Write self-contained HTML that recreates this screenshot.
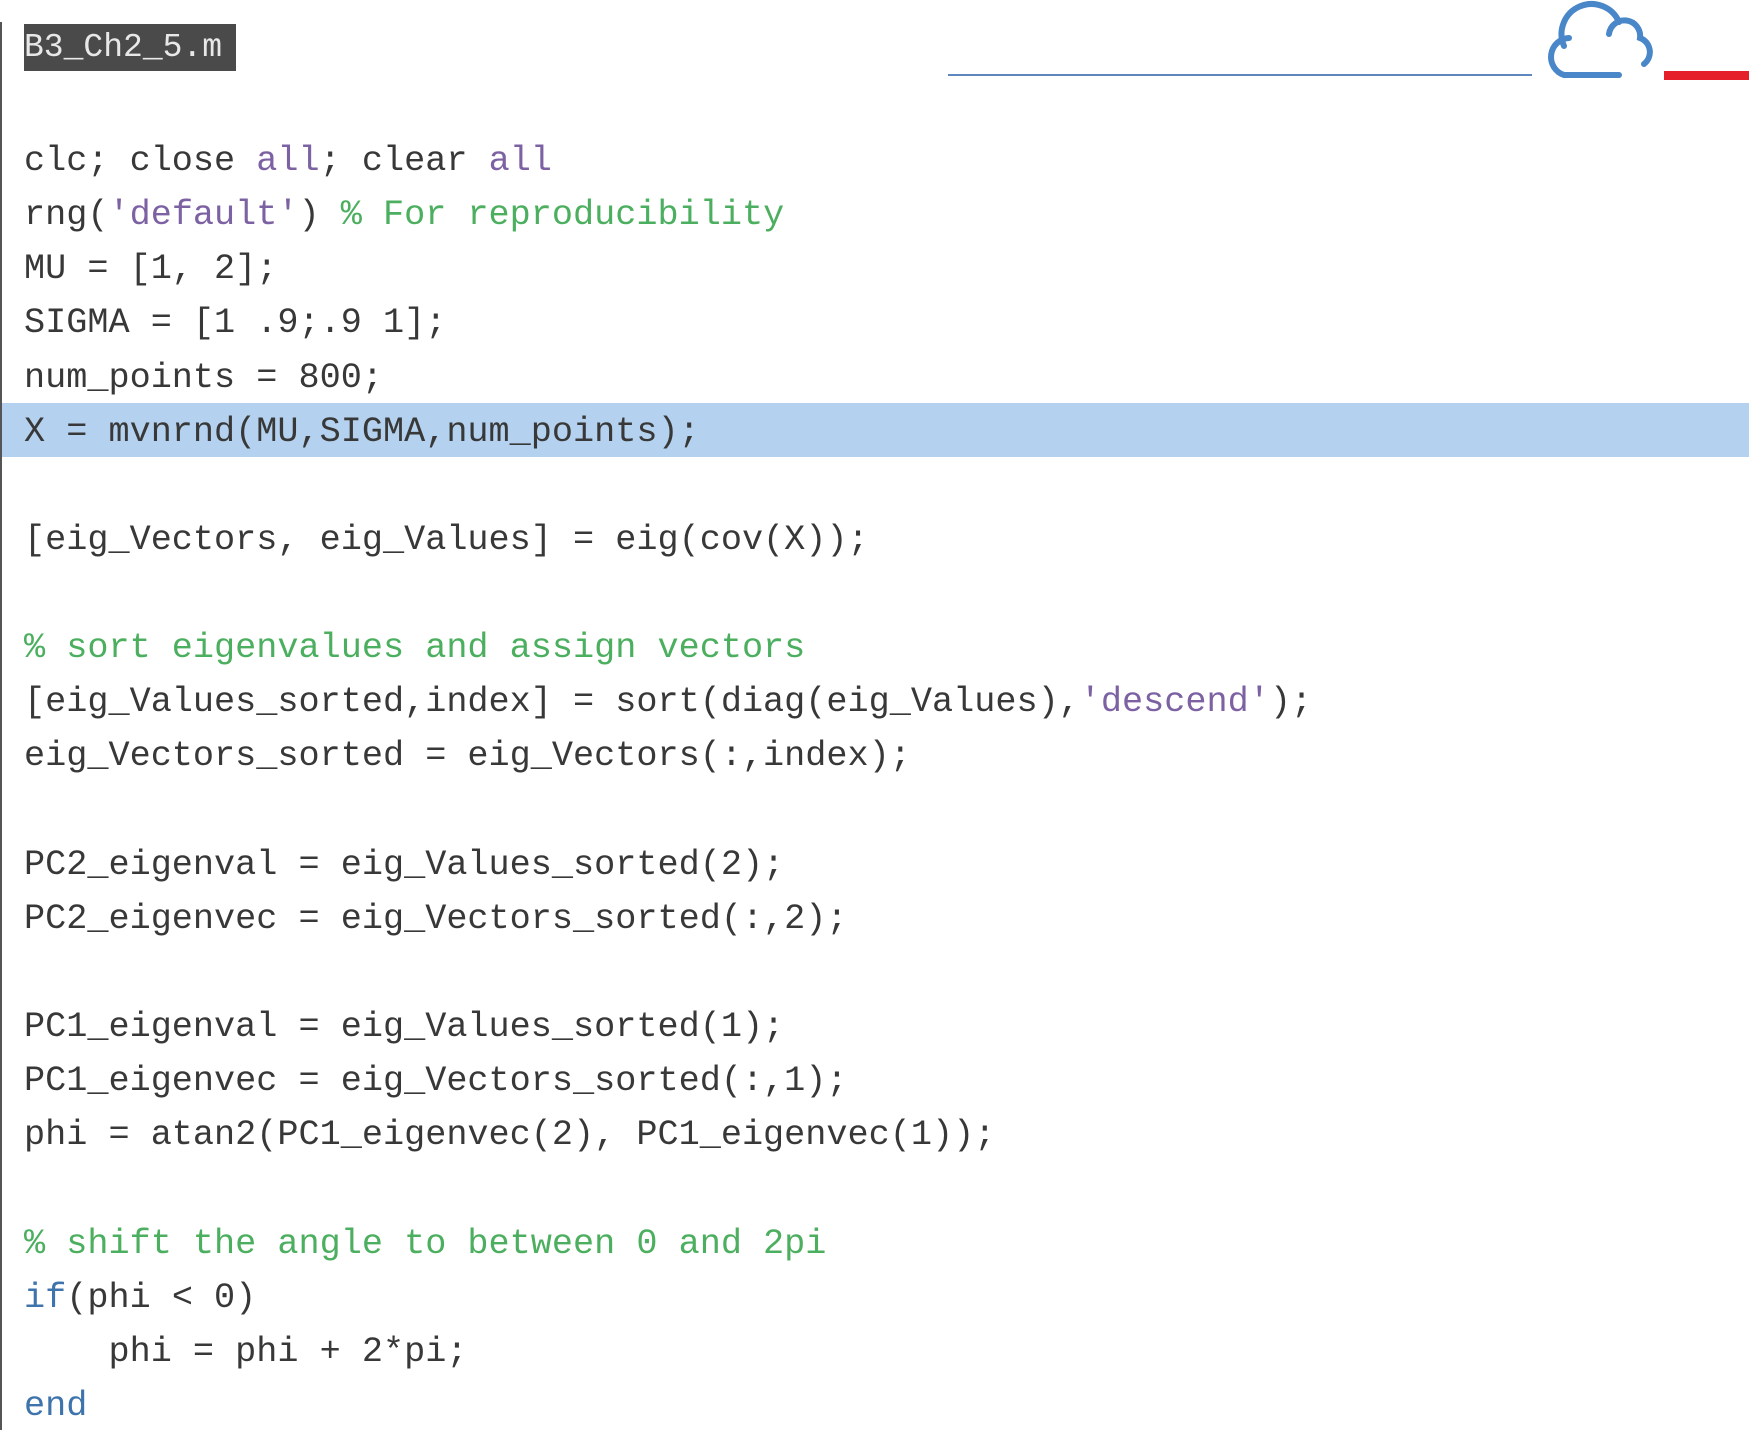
<!DOCTYPE html>
<html><head><meta charset="utf-8"><style>
html,body{margin:0;padding:0;background:#fff;width:1749px;height:1434px;overflow:hidden;position:relative}
.bl{position:absolute;left:0;top:22px;width:2px;height:1408px;background:#555}
.title{position:absolute;left:24px;top:24px;width:212px;height:47px;background:#4a4a4a;color:#e8e8e8;font:33px/47px "Liberation Mono",monospace;white-space:pre;overflow:hidden}
.hl{position:absolute;left:2px;top:403px;width:1747px;height:54px;background:#b4d2ef}
.code{position:absolute;left:24px;top:134px;font:35.2px/54.13px "Liberation Mono",monospace;color:#383838;white-space:pre;margin:0}
.s{color:#7d62a3}.c{color:#4caf5f}.k{color:#3f73ac}
</style></head><body>
<div class="bl"></div>
<div class="hl"></div>
<div class="title">B3_Ch2_5.m</div>
<div style="position:absolute;left:948px;top:74px;width:584px;height:2px;background:#5f87bd"></div>
<div style="position:absolute;left:1664px;top:71px;width:85px;height:9px;background:#e5202a"></div>
<svg style="position:absolute;left:0;top:0" width="1749" height="100" fill="none" stroke="#4a87c9" stroke-width="6" stroke-linecap="round">
<path d="M1619 75 H1564 A19 19 0 0 1 1569 38"/>
<path d="M1564 46 A29 29 0 0 1 1619 22"/>
<path d="M1609 34 A15 15 0 0 1 1640 38 A15 15 0 0 1 1644 64"/>
</svg>
<pre class="code">clc; close <span class="s">all</span>; clear <span class="s">all</span>
rng(<span class="s">'default'</span>) <span class="c">% For reproducibility</span>
MU = [1, 2];
SIGMA = [1 .9;.9 1];
num_points = 800;
X = mvnrnd(MU,SIGMA,num_points);

[eig_Vectors, eig_Values] = eig(cov(X));

<span class="c">% sort eigenvalues and assign vectors</span>
[eig_Values_sorted,index] = sort(diag(eig_Values),<span class="s">'descend'</span>);
eig_Vectors_sorted = eig_Vectors(:,index);

PC2_eigenval = eig_Values_sorted(2);
PC2_eigenvec = eig_Vectors_sorted(:,2);

PC1_eigenval = eig_Values_sorted(1);
PC1_eigenvec = eig_Vectors_sorted(:,1);
phi = atan2(PC1_eigenvec(2), PC1_eigenvec(1));

<span class="c">% shift the angle to between 0 and 2pi</span>
<span class="k">if</span>(phi &lt; 0)
    phi = phi + 2*pi;
<span class="k">end</span></pre>
</body></html>
